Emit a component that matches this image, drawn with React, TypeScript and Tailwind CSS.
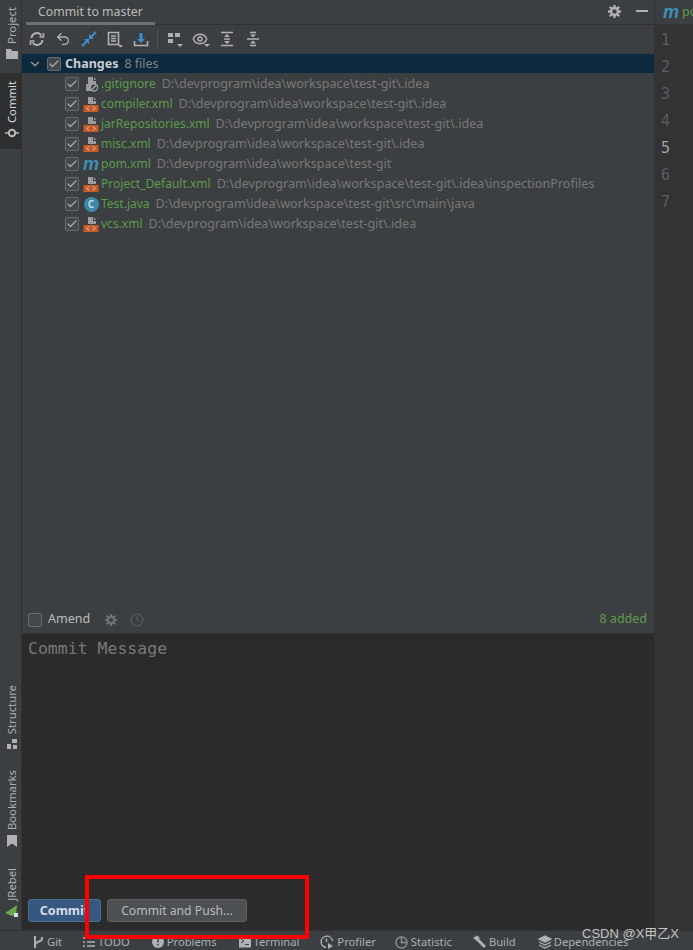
import { Check, ChevronDown, Clock, Eye, Undo2 } from 'lucide-react'

const files = [
    { name: '.gitignore', path: 'D:\\devprogram\\idea\\workspace\\test-git\\.idea', icon: 'ignore' },
    { name: 'compiler.xml', path: 'D:\\devprogram\\idea\\workspace\\test-git\\.idea', icon: 'xml' },
    { name: 'jarRepositories.xml', path: 'D:\\devprogram\\idea\\workspace\\test-git\\.idea', icon: 'xml' },
    { name: 'misc.xml', path: 'D:\\devprogram\\idea\\workspace\\test-git\\.idea', icon: 'xml' },
    { name: 'pom.xml', path: 'D:\\devprogram\\idea\\workspace\\test-git', icon: 'maven' },
    { name: 'Project_Default.xml', path: 'D:\\devprogram\\idea\\workspace\\test-git\\.idea\\inspectionProfiles', icon: 'xml' },
    { name: 'Test.java', path: 'D:\\devprogram\\idea\\workspace\\test-git\\src\\main\\java', icon: 'java' },
    { name: 'vcs.xml', path: 'D:\\devprogram\\idea\\workspace\\test-git\\.idea', icon: 'xml' },
]

function Gear({ size, color }: { size: number; color: string }) {
    return (
        <svg width={size} height={size} viewBox="0 0 14 14" fill="none" stroke={color}>
            <circle cx="7" cy="7" r="3.7" strokeWidth="2.6" />
            <path d="M7 0v14M0 7h14M2 2l10 10M12 2 2 12" strokeWidth="2" strokeDasharray="2.500 9" strokeDashoffset="0" />
            <path d="M7 14V0M14 7H0M12 12 2 2M2 12 12 2" strokeWidth="2" strokeDasharray="2.500 9" />
        </svg>
    )
}

function CheckBox({ checked = true }: { checked?: boolean }) {
    return (
        <span className="w-[14px] h-[14px] shrink-0 flex items-center justify-center rounded-[2px] border border-[#6b6b6b] bg-[#43494a]">
            {checked && <Check size={12} strokeWidth={2.5} className="text-[#a7a7a7]" />}
        </span>
    )
}

function FileIcon({ kind }: { kind: string }) {
    if (kind === 'maven') {
        return <span className="w-[16px] text-center font-['Liberation_Sans',sans-serif] text-[18px] leading-[16px] font-bold italic text-[#3f8fb5]">m</span>
    }
    if (kind === 'java') {
        return (
            <span className="w-[15px] h-[15px] rounded-full bg-[#3d88a8] flex items-center justify-center text-[10px] leading-none text-[#c9dbe3] font-bold">C</span>
        )
    }
    return (
        <svg width="16" height="16" viewBox="0 0 16 16">
            <path d="M5 1h5v4h3v3H5z M11 1l2 3h-2z" fill="#9a9c9e" />
            {kind === 'xml' ? (
                <>
                    <rect x="0.5" y="9" width="15" height="7" fill="#c4592a" />
                    <path d="M6 10.500 4 12.500l2 2M10 10.500l2 2-2 2" stroke="#f0d8c8" strokeWidth="1" fill="none" />
                </>
            ) : (
                <>
                    <rect x="3" y="8" width="7" height="7" fill="#9a9c9e" />
                    <circle cx="11" cy="11.500" r="3.600" fill="#3c3f41" stroke="#a5a7a9" strokeWidth="1.200" />
                    <path d="M8.600 14 13.400 9" stroke="#a5a7a9" strokeWidth="1.200" />
                </>
            )}
        </svg>
    )
}

function VerticalTab({ label, active, icon, className }: { label: string; active?: boolean; icon: React.ReactNode; className?: string }) {
    return (
        <div className={`w-[22px] flex flex-col items-center pl-[2px] gap-[5px] ${active ? 'bg-[#2d2f30] text-[#d8d8d8]' : 'text-[#a9b0b5]'} ${className ?? ''}`}>
            <span className="[writing-mode:vertical-rl] rotate-180 text-[11.300px] leading-[20px]">{label}</span>
            {icon}
        </div>
    )
}

const toolIcon = 'text-[#afb1b3]'

function Tool({ children }: { children: React.ReactNode }) {
    return <span className="w-[26px] h-[20px] shrink-0 flex items-center justify-center">{children}</span>
}

function Toolbar() {
    return (
        <div className="h-[28px] flex items-center pl-[2px] shrink-0">
            <Tool>
                <svg width="16" height="16" viewBox="0 0 16 16" fill="none" stroke="#afb1b3" strokeWidth="2">
                    <path d="M2.500 7a5.500 5.500 0 0 1 10-2.500M13.500 9a5.500 5.500 0 0 1-10 2.500" />
                    <path d="M14.500 2v4h-4M1.500 14v-4h4" strokeWidth="1.600" />
                </svg>
            </Tool>
            <Tool><Undo2 size={16} strokeWidth={2} className={toolIcon} /></Tool>
            <Tool>
                <svg width="16" height="16" viewBox="0 0 16 16">
                    <path d="M1 15 7 9M15 1 9 7" stroke="#3d8fd1" strokeWidth="2" />
                    <path d="M3 8h5v5zM13 8H8V3z" fill="#3d8fd1" />
                </svg>
            </Tool>
            <Tool>
                <svg width="18" height="18" viewBox="0 0 18 18" fill="none">
                    <path d="M2.500 2.500h10v12h-10zM5 6h5M5 8.500h5M5 11h5" stroke="#afb1b3" strokeWidth="1.600" />
                    <path d="M12 15h5l-2.500 2.500z" fill="#afb1b3" />
                </svg>
            </Tool>
            <Tool>
                <svg width="16" height="16" viewBox="0 0 16 16" fill="none">
                    <path d="M1.500 10v4.500h13V10" stroke="#afb1b3" strokeWidth="1.600" />
                    <path d="M8 2v7" stroke="#3d8fd1" strokeWidth="3" />
                    <path d="M4 8h8l-4 4z" fill="#3d8fd1" />
                </svg>
            </Tool>
            <span className="w-px h-[20px] bg-[#515456] ml-[3px] mr-[4px]" />
            <Tool>
                <svg width="18" height="18" viewBox="0 0 18 18">
                    <path d="M2 3h5v4H2zM9 3h5v4H9zM2 9h5v4H2z" fill="#afb1b3" />
                    <path d="M11 14h6l-3 3z" fill="#afb1b3" />
                </svg>
            </Tool>
            <Tool>
                <span className="relative w-[18px] h-[18px] flex items-center">
                    <Eye size={16} strokeWidth={2.200} className={toolIcon} />
                    <span className="absolute right-0 bottom-[1px] w-0 h-0 border-x-[3px] border-x-transparent border-t-[3px] border-t-[#afb1b3]" />
                </span>
            </Tool>
            <Tool>
                <svg width="16" height="16" viewBox="0 0 16 16">
                    <path d="M2 1.500h12M2 14.500h12M5 8h6" stroke="#afb1b3" strokeWidth="1.500" />
                    <path d="M8 3l3 3H5zM8 13l-3-3h6z" fill="#afb1b3" />
                </svg>
            </Tool>
            <Tool>
                <svg width="16" height="16" viewBox="0 0 16 16">
                    <path d="M2 8h12M5 1.500h6M5 14.500h6" stroke="#afb1b3" strokeWidth="1.500" />
                    <path d="M8 6.500l-3-3h6zM8 9.500l3 3H5z" fill="#afb1b3" />
                </svg>
            </Tool>
        </div>
    )
}

function FileRow({ name, path, icon }: { name: string; path: string; icon: string }) {
    return (
        <div className="h-[20px] flex items-center pl-[43px]">
            <CheckBox />
            <span className="w-[16px] ml-[4px] h-[16px] flex items-center justify-center shrink-0"><FileIcon kind={icon} /></span>
            <span className="ml-[2px] text-[12px] text-[#5c9a4c]">{name}</span>
            <span className="ml-[6px] text-[12.600px] text-[#787878]">{path}</span>
        </div>
    )
}

const statusItems = [
    { label: 'Git', cls: 'ml-[32px]', iconCls: 'w-[15px]', icon: <svg width="12" height="14" viewBox="0 0 12 14" fill="none" stroke="#afb1b3" strokeWidth="2"><path d="M3 1v12M10 2v2c0 3-7 2-7 6" /></svg> },
    { label: 'TODO', cls: 'ml-[21px]', iconCls: 'w-[15px]', icon: <svg width="12" height="12" viewBox="0 0 12 12" stroke="#afb1b3" strokeWidth="1.600"><path d="M0 2h2M4 2h8M0 6h2M4 6h8M0 10h2M4 10h8" /></svg> },
    { label: 'Problems', cls: 'ml-[22px]', iconCls: 'w-[15px]', icon: <svg width="12" height="12" viewBox="0 0 12 12"><circle cx="6" cy="6" r="6" fill="#afb1b3" /><path d="M6 2.500v4M6 8v1.500" stroke="#3c3f41" strokeWidth="1.500" /></svg> },
    { label: 'Terminal', cls: 'ml-[22px]', iconCls: 'w-[15px]', icon: <svg width="12" height="12" viewBox="0 0 12 12"><rect width="12" height="11" y="0.500" fill="#afb1b3" /><path d="M2 3l3 2-3 2M6 8.500h4" stroke="#3c3f41" fill="none" /></svg> },
    { label: 'Profiler', cls: 'ml-[21px]', iconCls: 'w-[17px]', icon: <svg width="14" height="14" viewBox="0 0 14 14" fill="none" stroke="#afb1b3" strokeWidth="1.400"><path d="M12.500 6A5.700 5.700 0 1 0 6 12.500M6.500 3.500V7" /><path d="M8 8l5 3-5 3z" fill="#afb1b3" stroke="none" /></svg> },
    { label: 'Statistic', cls: 'ml-[19px]', iconCls: 'w-[16px]', icon: <svg width="13" height="13" viewBox="0 0 13 13" fill="none" stroke="#8d8f91" strokeWidth="1.400"><circle cx="6.500" cy="6.500" r="5.500" /><path d="M6.500 1v5.500H12" /></svg> },
    { label: 'Build', cls: 'ml-[20px]', iconCls: 'w-[17px]', icon: <svg width="14" height="14" viewBox="0 0 14 14"><path d="M1 3 5 0.500 8 3 5 6z" fill="#afb1b3" /><path d="M5 4l8 8" stroke="#afb1b3" strokeWidth="3" /></svg> },
    { label: 'Dependencies', cls: 'ml-[22px]', iconCls: 'w-[16px]', icon: <svg width="14" height="14" viewBox="0 0 14 14" fill="none" stroke="#afb1b3" strokeWidth="1.300"><path d="M7 1l6 3-6 3-6-3z" fill="#afb1b3" /><path d="M1 7l6 3 6-3M1 10l6 3 6-3" /></svg> },
]

export default function App() {
    return (
        <div className="relative w-[693px] h-[950px] overflow-hidden flex flex-col bg-[#3c3f41] font-['Noto_Sans',sans-serif] text-[12.500px] text-[#bbbbbb]">
            <div className="flex-1 flex min-h-0">
                {/* barre d'outils gauche */}
                <div className="w-[22px] shrink-0 flex flex-col border-r border-[#323232] pb-[12px]">
                    <VerticalTab label="Project" className="pt-[7px]" icon={<svg width="12" height="10" viewBox="0 0 12 10"><path d="M0 0h5l1 2h6v8H0z" fill="#afb1b3" /></svg>} />
                    <VerticalTab label="Commit" active className="mt-[14px] pt-[8px] pb-[11px]" icon={
                        <svg width="14" height="10" viewBox="0 0 14 10" fill="none" stroke="#b8b8b8">
                            <circle cx="7" cy="5" r="3.200" strokeWidth="2" />
                            <path d="M0 5h3M11 5h3" strokeWidth="1.600" />
                        </svg>
                    } />
                    <div className="flex-1" />
                    <VerticalTab label="Structure" icon={<svg width="10" height="10" viewBox="0 0 10 10"><path d="M5 0h5v4H5zM0 5h4v5H0zM6 6h4v4H6z" fill="#afb1b3" /></svg>} />
                    <VerticalTab label="Bookmarks" className="mt-[21px]" icon={<svg width="10" height="12" viewBox="0 0 10 12"><path d="M0 0h10v12L5 8.500 0 12z" fill="#afb1b3" /></svg>} />
                    <VerticalTab label="JRebel" className="mt-[21px]" icon={<svg width="14" height="14" viewBox="0 0 14 14" className="-mt-[2px]"><path d="M0 9 12 1l-1 9-4 2z" fill="#6aa84f" /><rect x="9" y="9" width="4" height="4" fill="#ddd" /></svg>} />
                </div>

                {/* panneau commit */}
                <div className="flex-1 min-w-0 flex flex-col border-r border-[#323232]">
                    <div className="h-[25px] shrink-0 flex justify-between border-b border-[#323232] pl-[4px]">
                        <div className="w-[129px] h-[25px] border-b-[3px] border-[#6e7172] pl-[12px] pt-[3px] text-[12.300px] leading-[18px]">Commit to master</div>
                        <div className="flex items-center gap-[15px] pr-[6px] pb-[2px]">
                            <Gear size={13} color="#afb1b3" />
                            <span className="w-[12px] h-[2px] bg-[#afb1b3]" />
                        </div>
                    </div>
                    <Toolbar />
                    <div className="h-[19px] mt-[1px] shrink-0 flex items-center bg-[#0d293e] pl-[6px]">
                        <ChevronDown size={14} strokeWidth={2} className="text-[#a0a3a5]" />
                        <span className="ml-[5px]"><CheckBox /></span>
                        <span className="ml-[4px] pt-[1px] font-bold text-[#c8ccce]">Changes</span>
                        <span className="ml-[6px] pt-[1px] text-[#7f8486]">8 files</span>
                    </div>
                    <div className="pt-[1px]">
                        {files.map((f) => <FileRow key={f.name} {...f} />)}
                    </div>
                    <div className="flex-1" />
                    <div className="h-[26px] shrink-0 flex items-center pl-[6px] pr-[7px] pb-[2px] border-b border-[#323232]">
                        <CheckBox checked={false} />
                        <span className="ml-[6px]">Amend</span>
                        <span className="ml-[15px]"><Gear size={12} color="#6e7173" /></span>
                        <Clock size={14} strokeWidth={2} className="ml-[13px] text-[#565a5c]" />
                        <span className="ml-auto text-[12.500px] text-[#5c9a4c]">8 added</span>
                    </div>
                    <div className="h-[296px] shrink-0 bg-[#2b2b2b] flex flex-col justify-between pl-[6px] pt-[5px] pb-[8px]">
                        <div className="font-['DejaVu_Sans_Mono',monospace] text-[16.500px] leading-[20px] text-[#787878]">Commit Message</div>
                        <div className="flex gap-[6px]">
                            <div className="w-[73px] h-[23px] pt-[2px] rounded-[3px] border border-[#4c708c] bg-[#365880] flex items-center justify-center font-bold text-[#d6dde3]">Commit</div>
                            <div className="w-[140px] h-[23px] pt-[2px] rounded-[3px] border border-[#5e6060] bg-[#4c5052] flex items-center justify-center text-[12.200px] text-[#bbbbbb]">Commit and Push...</div>
                        </div>
                    </div>
                </div>

                {/* éditeur */}
                <div className="w-[38px] shrink-0 flex flex-col bg-[#313335]">
                    <div className="h-[25px] shrink-0 flex items-center bg-[#3c3f41] border-b border-[#323232] pl-[8px] overflow-hidden">
                        <span className="font-['Liberation_Sans',sans-serif] text-[18px] leading-[18px] font-bold italic text-[#3f8fb5]">m</span>
                        <span className="ml-[3px] text-[#5c9a4c]">pom.xml</span>
                    </div>
                    <div className="pt-[2px] pl-[6px] font-['DejaVu_Sans_Mono',monospace] text-[15px] leading-[27px] text-[#5a5d5f]">
                        <div>1</div>
                        <div>2</div>
                        <div>3</div>
                        <div>4</div>
                        <div className="text-[#a4a3a3]">5</div>
                        <div>6</div>
                        <div>7</div>
                    </div>
                </div>
            </div>

            {/* barre d'état */}
            <div className="h-[20px] shrink-0 flex items-center pt-[3px] border-t border-[#323232] text-[11.200px] text-[#a9b0b5]">
                {statusItems.map((s) => (
                    <div key={s.label} className={`${s.cls} flex items-center`}>
                        <span className={`${s.iconCls} flex items-center`}>{s.icon}</span>
                        <span>{s.label}</span>
                    </div>
                ))}
            </div>

            {/* surlignage et filigrane */}
            <div className="absolute left-[85px] top-[875px] w-[224px] h-[64px] border-[4px] border-[#ff0000]" />
            <div className="absolute left-[582px] top-[925px] text-[13px] leading-[18px] text-[#c4c4c4] font-['Liberation_Sans','Noto_Sans_CJK_SC',sans-serif]">CSDN @X甲乙X</div>
        </div>
    )
}
